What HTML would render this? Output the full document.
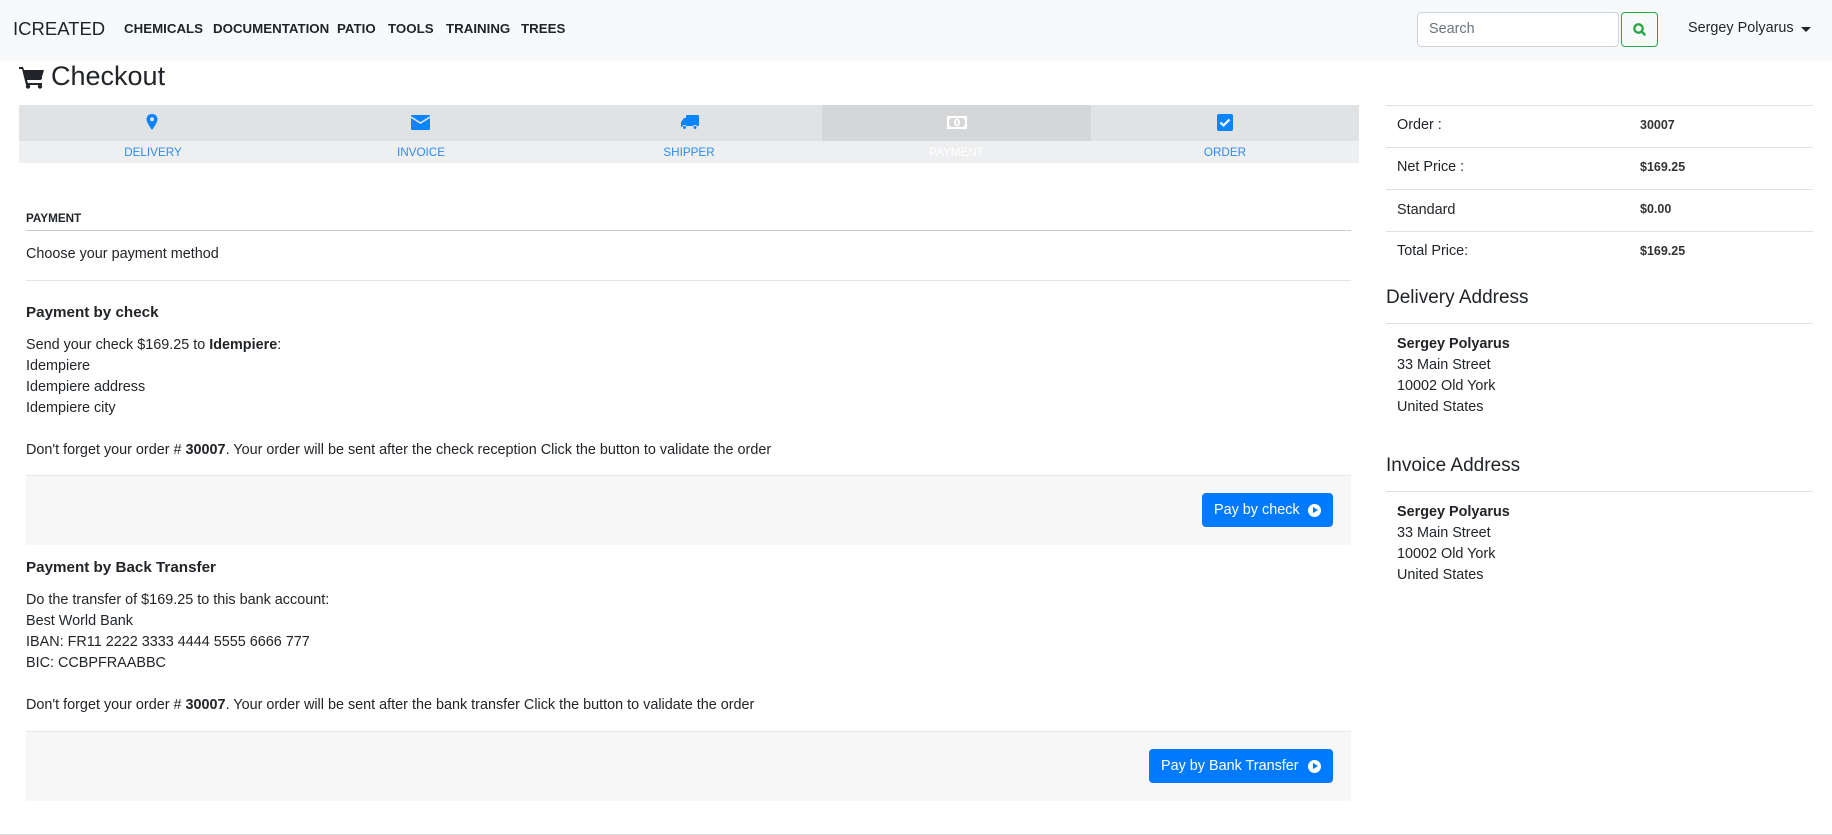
<!DOCTYPE html>
<html><head><meta charset="utf-8">
<style>
*{box-sizing:border-box;margin:0;padding:0}
body{width:1832px;height:835px;overflow:hidden;background:#fff;font-family:"Liberation Sans",Arial,sans-serif;color:#212529;font-size:14.4px;position:relative}
.a{position:absolute;white-space:nowrap}
.nav{position:absolute;left:0;top:0;width:1832px;height:61px;background:#f8f9fa}
.nl{font-weight:bold;font-size:13.3px;top:21px}
.lh{line-height:21px}
.hr{position:absolute;height:1px;background:#dee2e6}
.btn{position:absolute;background:#007bff;color:#fff;border-radius:4px;font-size:14.4px;line-height:34px;padding-left:12px}
.circ{display:inline-block;width:13px;height:13px;border-radius:50%;background:#fff;position:absolute;right:12px;top:10.5px}
.circ:after{content:"";position:absolute;left:3px;top:3px;border-left:5px solid #007bff;border-top:3.5px solid transparent;border-bottom:3.5px solid transparent;margin-left:2px}
.step{position:absolute;top:105px;height:36px;background:#e1e2e4}
.lab{position:absolute;top:141px;height:22px;background:#eeeff1;color:#2d8cf0;font-size:11.7px;text-align:center;line-height:23px}
</style></head><body>
<div class="nav"></div>
<div class="a" style="left:13px;top:18px;font-size:18.5px;color:#212529">ICREATED</div>
<div class="a nl" style="left:124px">CHEMICALS</div>
<div class="a nl" style="left:213px">DOCUMENTATION</div>
<div class="a nl" style="left:337px">PATIO</div>
<div class="a nl" style="left:388px">TOOLS</div>
<div class="a nl" style="left:446px">TRAINING</div>
<div class="a nl" style="left:521px">TREES</div>
<div class="a" style="left:1417px;top:12px;width:202px;height:35px;border:1px solid #ced4da;border-radius:4px;background:#fff;color:#6c757d;font-size:14.4px;padding:8px 11px">Search</div>
<div class="a" style="left:1621px;top:12px;width:37px;height:35px;border:1px solid #28a745;border-radius:4px">
<svg width="35" height="33" viewBox="0 0 35 33"><circle cx="16.5" cy="15.5" r="4.2" fill="none" stroke="#28a745" stroke-width="2.3"/><line x1="19.5" y1="18.5" x2="22.5" y2="21.5" stroke="#28a745" stroke-width="2.6" stroke-linecap="round"/></svg></div>
<div class="a" style="left:1688px;top:20px;font-size:14.4px">Sergey Polyarus</div>
<div class="a" style="left:1801px;top:27px;border-top:5px solid #212529;border-left:5px solid transparent;border-right:5px solid transparent"></div>

<svg class="a" style="left:19px;top:65px" width="26" height="24" viewBox="0 0 26 24"><path d="M0 2h4l1 3h20l-3 10H8l1 3h14v2H7L3 4H0z" fill="#212529"/><rect x="6" y="7" width="17" height="7" fill="#212529"/><circle cx="9" cy="21.5" r="2.2" fill="#212529"/><circle cx="21" cy="21.5" r="2.2" fill="#212529"/></svg>
<div class="a" style="left:51px;top:61px;font-size:27px">Checkout</div>

<div class="step" style="left:19px;width:803px"></div>
<div class="step" style="left:822px;width:269px;background:#d5d6d8"></div>
<div class="step" style="left:1091px;width:268px"></div>
<div class="lab" style="left:19px;width:268px">DELIVERY</div>
<div class="lab" style="left:287px;width:268px">INVOICE</div>
<div class="lab" style="left:555px;width:268px">SHIPPER</div>
<div class="lab" style="left:822px;width:269px;color:#fff">PAYMENT</div>
<div class="lab" style="left:1091px;width:268px">ORDER</div>
<svg class="a" style="left:146px;top:114px" width="12" height="16" viewBox="0 0 12 16"><path d="M6 0C2.7 0 .5 2.4.5 5.3.5 9 6 16 6 16s5.5-7 5.5-10.7C11.5 2.4 9.3 0 6 0z" fill="#0a84ff"/><circle cx="6" cy="5.3" r="2" fill="#e1e2e4"/></svg>
<svg class="a" style="left:411px;top:115px" width="19" height="15" viewBox="0 0 19 15"><rect width="19" height="15" rx="1" fill="#0a84ff"/><path d="M0 2l9.5 6L19 2" fill="none" stroke="#e1e2e4" stroke-width="1.6"/></svg>
<svg class="a" style="left:681px;top:115px" width="18" height="15" viewBox="0 0 18 15"><rect x="5" y="0" width="13" height="11" rx="1" fill="#0a84ff"/><path d="M0 7l3-4h3v9H0z" fill="#0a84ff"/><circle cx="3.5" cy="12.5" r="2" fill="#0a84ff" stroke="#e1e2e4"/><circle cx="14" cy="12.5" r="2" fill="#0a84ff" stroke="#e1e2e4"/></svg>
<svg class="a" style="left:947px;top:116px" width="20" height="13" viewBox="0 0 20 13"><rect width="20" height="13" fill="#fff"/><rect x="2" y="2" width="16" height="9" rx="3" fill="#d5d6d8"/><ellipse cx="10" cy="6.5" rx="3" ry="4" fill="#fff"/><rect x="9.3" y="4" width="1.4" height="5" fill="#d5d6d8"/></svg>
<svg class="a" style="left:1217px;top:114px" width="16" height="17" viewBox="0 0 16 17"><rect width="16" height="17" rx="2" fill="#0a84ff"/><path d="M3.5 8.5l3 3 6-6" fill="none" stroke="#fff" stroke-width="2.2"/></svg>

<div class="a" style="left:26px;top:212px;font-size:11.7px;font-weight:bold">PAYMENT</div>
<div class="hr" style="left:26px;top:230px;width:1325px;background:#ccc"></div>
<div class="a lh" style="left:26px;top:244px">Choose your payment method</div>
<div class="hr" style="left:26px;top:280px;width:1325px;background:#e5e5e5"></div>
<div class="a lh" style="left:26px;top:302px;font-weight:bold;font-size:15.2px">Payment by check</div>
<div class="a lh" style="left:26px;top:335px">Send your check $169.25 to <b>Idempiere</b>:<br>Idempiere<br>Idempiere address<br>Idempiere city<br><br>Don't forget your order # <b>30007</b>. Your order will be sent after the check reception Click the button to validate the order</div>
<div class="a" style="left:26px;top:475px;width:1325px;height:70px;background:#f7f7f7;border-top:1px solid #e8e8e8"></div>
<div class="btn" style="left:1202px;top:493px;width:131px">Pay by check<span class="circ"></span></div>

<div class="a lh" style="left:26px;top:557px;font-weight:bold;font-size:15.2px">Payment by Back Transfer</div>
<div class="a lh" style="left:26px;top:590px">Do the transfer of $169.25 to this bank account:<br>Best World Bank<br>IBAN: FR11 2222 3333 4444 5555 6666 777<br>BIC: CCBPFRAABBC<br><br>Don't forget your order # <b>30007</b>. Your order will be sent after the bank transfer Click the button to validate the order</div>
<div class="a" style="left:26px;top:731px;width:1325px;height:70px;background:#f7f7f7;border-top:1px solid #e8e8e8"></div>
<div class="btn" style="left:1149px;top:749px;width:184px">Pay by Bank Transfer<span class="circ"></span></div>
<div class="hr" style="left:0;top:834px;width:1832px;background:#ddd"></div>

<div class="hr" style="left:1386px;top:105px;width:427px"></div>
<div class="hr" style="left:1386px;top:147px;width:427px"></div>
<div class="hr" style="left:1386px;top:189px;width:427px"></div>
<div class="hr" style="left:1386px;top:231px;width:427px"></div>
<div class="a lh" style="left:1397px;top:115px">Order :</div>
<div class="a lh" style="left:1397px;top:157px">Net Price :</div>
<div class="a lh" style="left:1397px;top:200px">Standard</div>
<div class="a lh" style="left:1397px;top:241px">Total Price:</div>
<div class="a lh" style="left:1640px;top:115px;font-size:12.5px;font-weight:bold;color:#333">30007</div>
<div class="a lh" style="left:1640px;top:157px;font-size:12.5px;font-weight:bold;color:#333">$169.25</div>
<div class="a lh" style="left:1640px;top:199px;font-size:12.5px;font-weight:bold;color:#333">$0.00</div>
<div class="a lh" style="left:1640px;top:241px;font-size:12.5px;font-weight:bold;color:#333">$169.25</div>

<div class="a" style="left:1386px;top:287px;font-size:19px">Delivery Address</div>
<div class="hr" style="left:1386px;top:323px;width:427px"></div>
<div class="a lh" style="left:1397px;top:334px"><b>Sergey Polyarus</b><br>33 Main Street<br>10002 Old York<br>United States</div>
<div class="a" style="left:1386px;top:455px;font-size:19px">Invoice Address</div>
<div class="hr" style="left:1386px;top:491px;width:427px"></div>
<div class="a lh" style="left:1397px;top:502px"><b>Sergey Polyarus</b><br>33 Main Street<br>10002 Old York<br>United States</div>
</body></html>
